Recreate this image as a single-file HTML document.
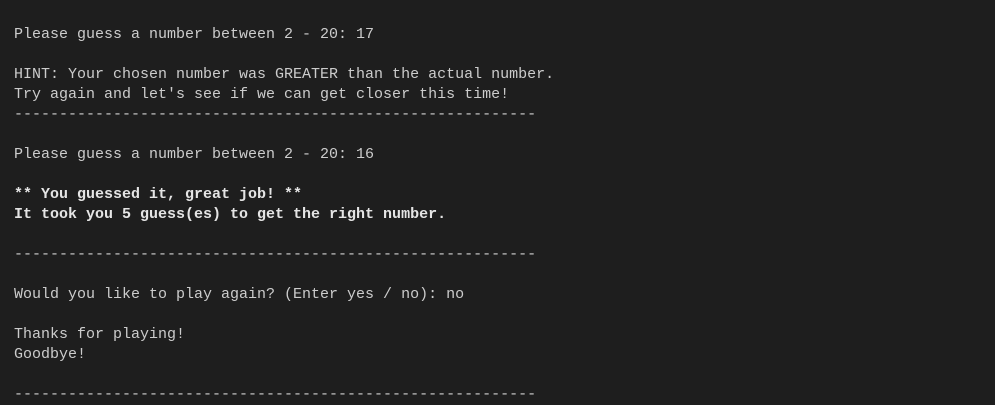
<!DOCTYPE html>
<html><head><style>
html,body{margin:0;padding:0;background:#1e1e1e;width:995px;height:400px;overflow:hidden}
pre{margin:0;position:absolute;left:14px;top:25px;font-family:"Liberation Mono",monospace;font-size:15px;line-height:20px;color:#cccccc}
b{font-weight:bold;color:#e5e5e5}
</style></head><body><pre>Please guess a number between 2 - 20: 17

HINT: Your chosen number was GREATER than the actual number.
Try again and let's see if we can get closer this time!
----------------------------------------------------------

Please guess a number between 2 - 20: 16

<b>** You guessed it, great job! **
It took you 5 guess(es) to get the right number.</b>

----------------------------------------------------------

Would you like to play again? (Enter yes / no): no

Thanks for playing!
Goodbye!

----------------------------------------------------------</pre></body></html>
